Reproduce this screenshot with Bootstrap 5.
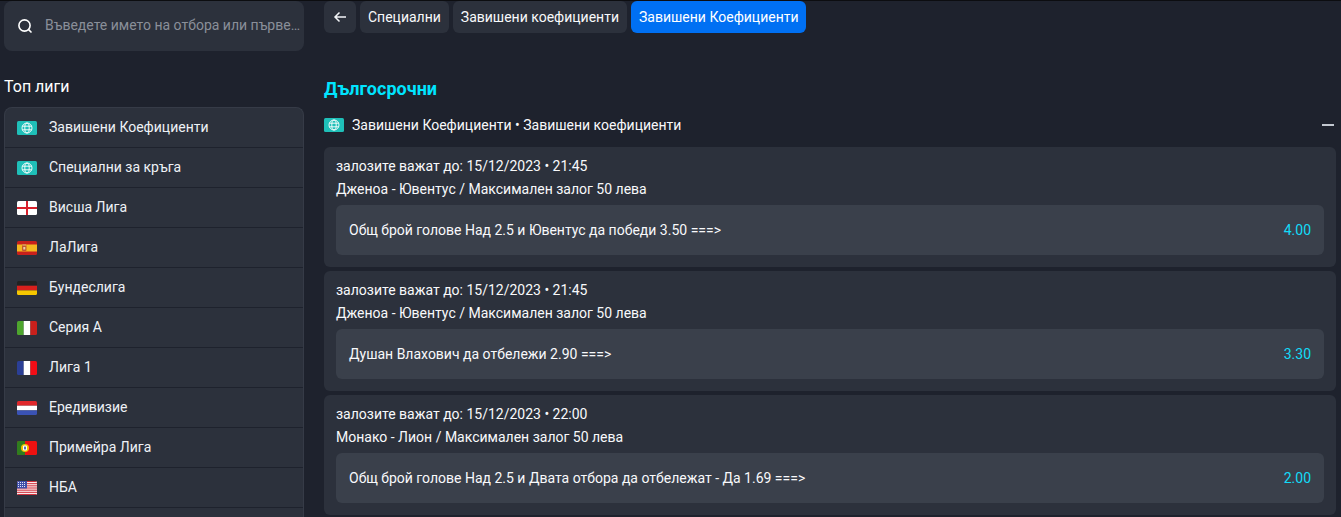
<!DOCTYPE html>
<html lang="bg">
  <head>
    <meta charset="UTF-8" />
    <meta name="viewport" content="width=device-width, initial-scale=1.0" />
    <title>Дългосрочни</title>
    <link href="https://cdn.jsdelivr.net/npm/bootstrap@5.3.3/dist/css/bootstrap.min.css" rel="stylesheet" />
    <style>
      html, body { height: 517px; overflow: hidden; }
      body { background: #1e222d; color: #f8f9fb; font-family: Roboto, "Liberation Sans", sans-serif; font-size: 14px; border-top: 1px solid #0c0d10; }
      .page-wrap { height: 516px; overflow: hidden; padding: 0 5px 0 4px; gap: 20px; }
      .side-col { width: 300px; flex: none; }
      .search-box { height: 50px; background: #2c313c; border-radius: 8px; padding: 0 2px 0 13px; gap: 12px; }
      .search-input { background: transparent; border: 0; outline: 0; width: 100%; padding: 0 0 2px; color: #fff; font-size: 14px; font-family: inherit; text-overflow: ellipsis; }
      .search-input::placeholder { color: #8a8f99; opacity: 1; }
      .side-title { font-size: 16px; line-height: 20px; margin: 26px 0 10px; font-weight: 400; color: #fff; }
      .league-box { background: #2c313c; border-radius: 8px; border: 1px solid #363b47; border-bottom: 0; }
      .league-row { height: 40px; padding: 0 12px; gap: 12px; border-bottom: 1px solid #1e222d; color: #eef1f6; }
      .league-row svg, .head-row svg { flex: none; display: block; }
      .crumb { height: 32px; padding: 0 8px; background: #2c313c; color: #f8f9fb; border: 0; border-radius: 6px; font-size: 14px; font-weight: 400; }
      .crumb.back-btn { width: 32px; padding: 0; }
      .crumb.is-on { background: #0070f3; color: #fff; padding-right: 7px; }
      .section-title { font-size: 18px; font-weight: 700; line-height: 22px; color: #00e5ff; margin: 45px 0 14px; }
      .head-row { height: 22px; gap: 8px; margin-bottom: 11px; }
      .minus-bar { width: 12px; height: 2px; background: #c3c8d0; margin-right: 2px; }
      .bet-card { background: #2c313c; border-radius: 6px; padding: 8px 12px 12px; margin-bottom: 4px; height: 120px; }
      .bet-line { line-height: 23px; height: 23px; }
      .bet-line + .bet-line { margin-bottom: 4px; }
      .odd-row { height: 50px; background: #3a404b; border-radius: 6px; padding: 0 13px; margin-top: 1px; }
      .odd-num { color: #12dcf8; }
    </style>
  </head>
  <body>
    <div class="d-flex page-wrap">
      <div class="side-col">
        <div class="search-box d-flex align-items-center">
          <svg width="16" height="16" viewBox="0 0 16 16" fill="none" stroke="#fff" stroke-width="1.6" class="flex-shrink-0"><circle cx="7.5" cy="7.5" r="5.6"/><path d="M11.6 11.6 14.5 14.5"/></svg>
          <input class="search-input" type="text" placeholder="Въведете името на отбора или първенството" />
        </div>
        <div class="side-title">Топ лиги</div>
        <div class="league-box" id="leagues"></div>
      </div>
      <div class="flex-grow-1">
        <div class="d-flex gap-1">
          <button class="crumb back-btn d-flex align-items-center justify-content-center" type="button">
            <svg width="14" height="14" viewBox="0 0 14 14" fill="none" stroke="#f2f4f7" stroke-width="1.5"><path d="M13 7H2M6.5 2.5 2 7l4.5 4.5"/></svg>
          </button>
          <button class="crumb" type="button">Специални</button>
          <button class="crumb" type="button">Завишени коефициенти</button>
          <button class="crumb is-on" type="button">Завишени Коефициенти</button>
        </div>
        <div class="section-title">Дългосрочни</div>
        <div class="head-row d-flex align-items-center">
          <svg width="20" height="14" viewBox="0 0 20 14"><rect width="20" height="14" rx="1.5" fill="#1fbfb8"/><g fill="none" stroke="#fff" stroke-width=".9"><circle cx="10" cy="7" r="5"/><ellipse cx="10" cy="7" rx="2.2" ry="5"/><path d="M5.3 5.2h9.4M5.3 8.8h9.4"/></g></svg>
          <span class="flex-grow-1">Завишени Коефициенти • Завишени коефициенти</span>
          <span class="minus-bar"></span>
        </div>
        <div id="bets"></div>
      </div>
    </div>

    <script>
      const globe = `<svg width="20" height="14" viewBox="0 0 20 14"><rect width="20" height="14" rx="1.5" fill="#1fbfb8"/><g fill="none" stroke="#fff" stroke-width=".9"><circle cx="10" cy="7" r="5"/><ellipse cx="10" cy="7" rx="2.2" ry="5"/><path d="M5.3 5.2h9.4M5.3 8.8h9.4"/></g></svg>`;
      const flag = (inner) => `<svg width="20" height="14" viewBox="0 0 20 14"><defs><clipPath id="fc"><rect width="20" height="14" rx="1.5"/></clipPath></defs><g clip-path="url(#fc)">${inner}</g></svg>`;
      const usStripes = [0, 2.15, 4.3, 6.45, 8.6, 10.75, 12.9].map((y) => `<rect y="${y}" width="20" height="1.1" fill="#d0303c"/>`).join("");

      const leagues = [
        ["Завишени Коефициенти", globe],
        ["Специални за кръга", globe],
        ["Висша Лига", flag(`<rect width="20" height="14" fill="#fff"/><rect x="9" width="2" height="14" fill="#d8202c"/><rect y="6" width="20" height="2" fill="#d8202c"/>`)],
        ["ЛаЛига", flag(`<rect width="20" height="14" fill="#c8201c"/><rect y="3.5" width="20" height="7" fill="#f4b820"/><rect x="5" y="4" width="4.5" height="6" rx="1" fill="#c0582e"/><path d="M5.5 3h3.5v2H5.5z" fill="#d88a50"/><rect x="6.3" y="6" width="2" height="2.5" fill="#e8d0b0"/>`)],
        ["Бундеслига", flag(`<rect width="20" height="4.7" fill="#222"/><rect y="4.7" width="20" height="4.7" fill="#d8201c"/><rect y="9.4" width="20" height="4.6" fill="#f6c700"/>`)],
        ["Серия А", flag(`<rect width="6.7" height="14" fill="#4ea52e"/><rect x="6.7" width="6.7" height="14" fill="#fff"/><rect x="13.4" width="6.6" height="14" fill="#c8201c"/>`)],
        ["Лига 1", flag(`<rect width="6.7" height="14" fill="#2b3f96"/><rect x="6.7" width="6.7" height="14" fill="#fff"/><rect x="13.4" width="6.6" height="14" fill="#f20d16"/>`)],
        ["Ередивизие", flag(`<rect width="20" height="4.7" fill="#e0282c"/><rect y="4.7" width="20" height="4.7" fill="#fff"/><rect y="9.4" width="20" height="4.6" fill="#3a52b4"/>`)],
        ["Примейра Лига", flag(`<rect width="20" height="14" fill="#ee1111"/><rect width="8" height="14" fill="#2f7d1e"/><circle cx="8" cy="7" r="4" fill="#f2c200"/><rect x="6" y="4.6" width="4" height="4.8" rx="1" fill="#fff"/><rect x="7" y="5.6" width="2" height="2.8" fill="#5a6fb0"/>`)],
        ["НБА", flag(`<rect width="20" height="14" fill="#fff"/>${usStripes}<rect width="10" height="7.5" fill="#3f4fa8"/><path d="M1 1.5h8M1 3.5h8M1 5.5h8" stroke="#dfe3f5" stroke-width="1" stroke-dasharray="1 1"/>`)],
        ["", ""],
      ];

      // ids of clip paths must differ per flag
      document.getElementById("leagues").innerHTML = leagues.map((l, i) => {
        return `<div class="league-row d-flex align-items-center">${l[1].replaceAll("fc", "fc" + i)}<span>${l[0]}</span></div>`;
      }).join("");

      const bets = [
        ["15/12/2023 • 21:45", "Дженоа - Ювентус / Максимален залог 50 лева", "Общ брой голове Над 2.5 и Ювентус да победи 3.50 ===>", "4.00"],
        ["15/12/2023 • 21:45", "Дженоа - Ювентус / Максимален залог 50 лева", "Душан Влахович да отбележи 2.90 ===>", "3.30"],
        ["15/12/2023 • 22:00", "Монако - Лион / Максимален залог 50 лева", "Общ брой голове Над 2.5 и Двата отбора да отбележат - Да 1.69 ===>", "2.00"],
      ];

      document.getElementById("bets").innerHTML = bets.map((b) => {
        return `<div class="bet-card">
          <div class="bet-line">залозите важат до: ${b[0]}</div>
          <div class="bet-line">${b[1]}</div>
          <div class="odd-row d-flex align-items-center justify-content-between">
            <span>${b[2]}</span><span class="odd-num">${b[3]}</span>
          </div>
        </div>`;
      }).join("");
    </script>
    <script src="https://cdn.jsdelivr.net/npm/bootstrap@5.3.3/dist/js/bootstrap.bundle.min.js"></script>
  </body>
</html>
